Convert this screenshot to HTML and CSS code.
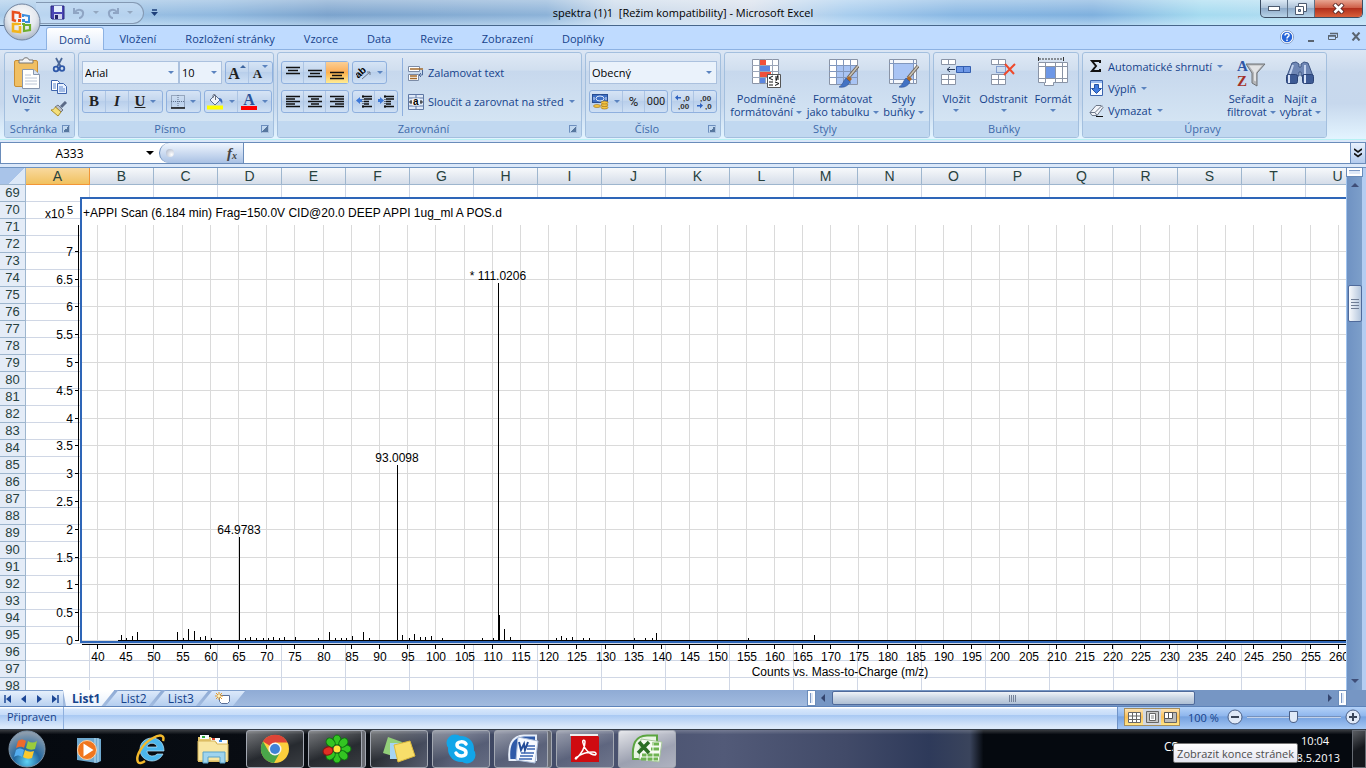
FILE: index.html
```html
<!DOCTYPE html>
<html lang="cs">
<head>
    <meta charset="UTF-8">
    <meta name="viewport" content="width=device-width, initial-scale=1.0">
    <title>spektra (1)1 [Režim kompatibility] - Microsoft Excel</title>
    <link rel="stylesheet" href="styles.css">
</head>
<body>
    <header class="titlebar">
        <button class="office-btn" aria-label="Tlačítko Office">
            <svg width="38" height="38" viewBox="0 0 38 38">
                <defs>
                    <radialGradient id="orb" cx="50%" cy="35%" r="65%">
                        <stop offset="0" stop-color="#fff"/><stop offset=".6" stop-color="#e4e8ee"/><stop offset="1" stop-color="#a9b4c4"/>
                    </radialGradient>
                </defs>
                <circle cx="19" cy="19" r="18" fill="url(#orb)" stroke="#71849f"/>
                <g fill="none" stroke-width="2.6">
                    <path d="M17 10l-7-1v8l3 1M17 10v5" stroke="#e8501e"/>
                    <path d="M20 14v-2l6 1v6h-4" stroke="#3b8ede" stroke-width="2"/>
                    <path d="M16 21h-6v7l7 1v-6" stroke="#f3b41b"/>
                    <path d="M20 22h7v5l-6 1v-5" stroke="#6fae2c" stroke-width="2.2"/>
                </g>
                <path d="M15 16h3v3h-3z" fill="#e8501e"/><path d="M19 16h3v3h-3z" fill="#3b8ede"/>
                <path d="M15 20h3v2h-3z" fill="#f3b41b"/><path d="M19 20h3v2h-3z" fill="#6fae2c"/>
            </svg>
        </button>
        <div class="quick">
            <button aria-label="Uložit"><svg width="15" height="15" viewBox="0 0 15 15"><path d="M1 1h13v13H2l-1-1z" fill="#4a45b5" stroke="#2b287c"/><path d="M4 1h8v6H4z" fill="#e4eefc"/><path d="M4 9h8v5H4z" fill="#d0d3ee"/><path d="M5 10h3v4H5z" fill="#26236b"/></svg></button>
            <button aria-label="Zpět"><svg width="14" height="14" viewBox="0 0 14 14"><path d="M2 2v5h5M3 6c3-4 9-2 8 2 0 2-2 4-4 4" fill="none" stroke="#8fa5c4" stroke-width="2"/></svg></button>
            <span class="caret grey"></span>
            <button aria-label="Znovu"><svg width="14" height="14" viewBox="0 0 14 14"><path d="M12 2v5H7M11 6C8 2 2 4 3 8c0 2 2 4 4 4" fill="none" stroke="#8fa5c4" stroke-width="2"/></svg></button>
            <span class="caret grey"></span>
        </div>
        <button class="quick-more" aria-label="Přizpůsobit panel"><svg width="7" height="8" viewBox="0 0 7 8"><path d="M1 1h5" stroke="#1d3f7a" stroke-width="1.5"/><path d="M0 3h7L3.5 7z" fill="#1d3f7a"/></svg></button>
        <h1>spektra (1)1&nbsp; [Režim kompatibility] - Microsoft Excel</h1>
        <div class="win-btns">
            <button aria-label="Minimalizovat"><svg width="14" height="7"><rect x="1.5" y="1.5" width="11" height="4" fill="#fff" stroke="#4d5b70"/></svg></button>
            <button aria-label="Obnovit"><svg width="12" height="12" viewBox="0 0 12 12"><path d="M3.5.5h8v8h-8z" fill="#fff" stroke="#4d5b70"/><path d="M.5 3.5h8v8h-8z" fill="#fff" stroke="#4d5b70"/><path d="M3.500 6.500h2v2h-2z" fill="#9fb6d0" stroke="#4d5b70"/></svg></button>
            <button class="close" aria-label="Zavřít"><svg width="13" height="11" viewBox="0 0 13 11"><path d="M2 1l9 9M11 1l-9 9" stroke="#5c2a28" stroke-width="4.500"/><path d="M2.500 1.500l8 8M10.500 1.500l-8 8" stroke="#fff" stroke-width="2.500"/></svg></button>
        </div>
    </header>

    <nav class="tabs">
        <button class="tab active">Domů</button>
        <button class="tab">Vložení</button>
        <button class="tab">Rozložení stránky</button>
        <button class="tab">Vzorce</button>
        <button class="tab">Data</button>
        <button class="tab">Revize</button>
        <button class="tab">Zobrazení</button>
        <button class="tab">Doplňky</button>
        <div class="doc-btns">
            <button aria-label="Nápověda"><svg width="14" height="14" viewBox="0 0 14 14"><circle cx="7" cy="7" r="6" fill="#2765d8" stroke="#fff" stroke-width="1.500"/><circle cx="7" cy="7" r="6.600" fill="none" stroke="#4b6ea8" stroke-width=".6"/><path d="M5 5.500c0-3 4.500-2.500 4 0-.3 1.200-2 1.200-2 3M7 9.500v1.500" fill="none" stroke="#fff" stroke-width="1.500"/></svg></button>
            <button aria-label="Minimalizovat sešit"><svg width="8" height="12"><path d="M1 10h6" stroke="#5a6470" stroke-width="2"/></svg></button>
            <button aria-label="Obnovit sešit"><svg width="10" height="10" viewBox="0 0 10 10"><path d="M2.500 1.500h7v4h-2M.5 3.500h7v4h-7z" fill="none" stroke="#5a6470"/><path d="M0 4h8M2 1.500h8" stroke="#5a6470" stroke-width="1.500"/></svg></button>
            <button aria-label="Zavřít sešit"><svg width="10" height="9" viewBox="0 0 10 9"><path d="M1.500.5l7 8M8.500.5l-7 8" stroke="#5a6470" stroke-width="2"/></svg></button>
        </div>
    </nav>

    <section class="ribbon">
        <div class="group g-clip">
            <div class="group-body">
                <button class="big">
                    <svg width="28" height="32" viewBox="0 0 28 32"><rect x="1.500" y="3.500" width="23" height="26" rx="1.500" fill="#f0bf63" stroke="#c98f35"/><path d="M6 6V3h4c0-3 6-3 6 0h4v3z" fill="#f4f4f4" stroke="#777"/><path d="M9.500 12.500h11l6 5v14h-17z" fill="#fff" stroke="#8796ae"/><path d="M20.500 12.500v5h6" fill="#d8e2f0" stroke="#8796ae"/><path d="M12 18h6M12 21h12M12 24h12M12 27h12" stroke="#bcc6d6"/></svg>
                    <span>Vložit</span><i class="caret"></i>
                </button>
                <div class="col">
                    <button aria-label="Vyjmout"><svg width="16" height="16" viewBox="0 0 16 16"><path d="M5 1l5 9M11 1L6 10" stroke="#4a6798" stroke-width="1.800"/><circle cx="5" cy="12" r="2.300" fill="none" stroke="#2f58a8" stroke-width="1.800"/><circle cx="11" cy="11.500" r="2.300" fill="none" stroke="#2f58a8" stroke-width="1.800"/></svg></button>
                    <button aria-label="Kopírovat"><svg width="16" height="16" viewBox="0 0 16 16"><path d="M.5 1.500h6l2 2v8h-8z" fill="#fff" stroke="#3e65ad"/><path d="M6.500 4.500h6l3 3v7h-9z" fill="#eaf2ff" stroke="#3e65ad"/><path d="M2 5h3M2 7h3M2 9h3M8 8h4M8 10h6M8 12h6" stroke="#5b85cc"/></svg></button>
                    <button aria-label="Kopírovat formát"><svg width="16" height="16" viewBox="0 0 16 16"><path d="M15 1l-5 5" stroke="#5b6a86" stroke-width="3"/><path d="M7 4l5 5-2 2-6-5z" fill="#b9bec8" stroke="#6d7789"/><path d="M4.500 6L10 11l-3 4-7-6c2 0 3-1 4.500-3z" fill="#f4df7a" stroke="#a98d2c"/></svg></button>
                </div>
            </div>
            <div class="group-label"><span>Schránka</span><button class="launch" aria-label="Schránka"></button></div>
        </div>

        <div class="group g-font">
            <div class="group-body rows">
                <div class="row">
                    <div class="combo-pair">
                        <span class="combo wide"><select aria-label="Písmo"><option>Arial</option></select></span>
                        <span class="combo small"><select aria-label="Velikost písma"><option>10</option></select></span>
                    </div>
                    <div class="btns push">
                        <button class="serif big-a" aria-label="Zvětšit písmo">A<i class="up"></i></button><button class="serif small-a" aria-label="Zmenšit písmo">A<i class="down"></i></button>
                    </div>
                </div>
                <div class="row">
                    <div class="btns">
                        <button class="serif"><b>B</b></button><button class="serif"><b><em>I</em></b></button><button class="serif split"><b><u>U</u></b><i class="caret"></i></button>
                    </div>
                    <div class="btns">
                        <button class="split" aria-label="Ohraničení"><svg width="14" height="14" viewBox="0 0 14 14"><path d="M.5.5h13v12H.5zM7 0v13M0 6.500h14" fill="none" stroke="#5f708c" stroke-dasharray="1 1"/><path d="M0 13h14" stroke="#111" stroke-width="1.500"/></svg><i class="caret"></i></button>
                    </div>
                    <div class="btns push">
                        <button class="split" aria-label="Barva výplně"><svg width="17" height="16" viewBox="0 0 17 16"><path d="M8 1l5 5-5 5-5-5z" fill="#eef3fb" stroke="#5a6e90"/><path d="M6 4V1.500c0-1.500 2.500-1.500 2.500 0V6" fill="none" stroke="#6a6f7a"/><path d="M12 4c3 0 4 3 3 6-1-3-2-3-3-3z" fill="#3b6bbd"/><path d="M0 11.500h16v4H0z" fill="#ff0"/></svg><i class="caret"></i></button><button class="split" aria-label="Barva písma"><span class="font-color">A</span><i class="caret"></i></button>
                    </div>
                </div>
            </div>
            <div class="group-label"><span>Písmo</span><button class="launch" aria-label="Písmo"></button></div>
        </div>

        <div class="group g-align">
            <div class="group-body">
                <div class="rows">
                    <div class="row">
                        <div class="btns even">
                            <button aria-label="Zarovnat nahoru"><svg width="14" height="14"><path d="M0 1.500h14M2 4.500h10M0 7.500h14" stroke="#111" stroke-width="1.500"/></svg></button><button aria-label="Zarovnat na střed svisle"><svg width="14" height="14"><path d="M0 4.500h14M2 7.500h10M0 10.500h14" stroke="#111" stroke-width="1.500"/></svg></button><button class="on" aria-label="Zarovnat dolů"><svg width="14" height="14"><path d="M0 6.500h14M2 9.500h10M0 12.500h14" stroke="#111" stroke-width="1.500"/></svg></button>
                        </div>
                        <div class="btns"><button class="split" aria-label="Orientace"><svg width="16" height="14" viewBox="0 0 16 14"><text x="0" y="9" class="ab" transform="rotate(-42 6 8)">ab</text><path d="M6 13l8-7M11 6h3v3" fill="none" stroke="#6a7689"/></svg><i class="caret"></i></button></div>
                    </div>
                    <div class="row">
                        <div class="btns even">
                            <button aria-label="Zarovnat text vlevo"><svg width="14" height="14"><path d="M0 1.500h14M0 4h9M0 6.500h14M0 9h9M0 11.500h14" stroke="#111" stroke-width="1.300"/></svg></button><button aria-label="Zarovnat na střed"><svg width="14" height="14"><path d="M0 1.500h14M3 4h8M0 6.500h14M3 9h8M0 11.500h14" stroke="#111" stroke-width="1.300"/></svg></button><button aria-label="Zarovnat text vpravo"><svg width="14" height="14"><path d="M0 1.500h14M5 4h9M0 6.500h14M5 9h9M0 11.500h14" stroke="#111" stroke-width="1.300"/></svg></button>
                        </div>
                        <div class="btns even">
                            <button aria-label="Zmenšit odsazení"><svg width="16" height="14" viewBox="0 0 16 14"><path d="M6 1.500h10M8 4h8M8 6.500h5M8 9h5M6 11.500h10" stroke="#111" stroke-width="1.300"/><path d="M7 0v14" stroke="#111" stroke-dasharray="1 1"/><path d="M0 5.500l4-3.500v2h2v3H4v2z" fill="#3d78d8"/></svg></button><button aria-label="Zvětšit odsazení"><svg width="16" height="14" viewBox="0 0 16 14"><path d="M6 1.500h10M8 4h8M8 6.500h5M8 9h5M6 11.500h10" stroke="#111" stroke-width="1.300"/><path d="M7 0v14" stroke="#111" stroke-dasharray="1 1"/><path d="M6 5.500L2 2v2H0v3h2v2z" fill="#3d78d8"/></svg></button>
                        </div>
                    </div>
                </div>
                <div class="sep"></div>
                <div class="rows">
                    <button class="line"><svg width="16" height="16" viewBox="0 0 16 16"><path d="M.5 1.500h11v5H.5zM.5 9.500h10v6H.5z" fill="#fff" stroke="#7b8ba6"/><path d="M2 4h13M2 11h7M2 13.500h7" stroke="#a2692b" stroke-width="1.300"/><path d="M14.500 5v5h-3M13 8l-2 2 2 2" fill="none" stroke="#4a6798"/></svg>Zalamovat text</button>
                    <button class="line"><svg width="16" height="16" viewBox="0 0 16 16"><path d="M.5.5h15v15H.5z" fill="#dfe9f8" stroke="#5f78a5"/><path d="M0 4h16M0 12h16M8 0v4M8 12v4" stroke="#5f78a5"/><path d="M1 8h3M12 8h3M3 6v4M13 6v4" stroke="#222"/><path d="M4.500 4.500h7v7h-7z" fill="#fff"/><text x="5" y="11" class="tiny">a</text></svg>Sloučit a zarovnat na střed<i class="caret"></i></button>
                </div>
            </div>
            <div class="group-label"><span>Zarovnání</span><button class="launch" aria-label="Zarovnání"></button></div>
        </div>

        <div class="group g-num">
            <div class="group-body rows">
                <div class="row"><span class="combo full"><select aria-label="Formát čísla"><option>Obecný</option></select></span></div>
                <div class="row">
                    <div class="btns">
                        <button class="split" aria-label="Finanční formát"><svg width="17" height="16" viewBox="0 0 17 16"><rect x=".5" y=".5" width="15" height="8" fill="#3e6fc4" stroke="#284d92"/><ellipse cx="8" cy="4.500" rx="4" ry="2.500" fill="none" stroke="#dce8fa"/><path d="M2 3v3M14 3v3" stroke="#dce8fa"/><g fill="#f4c542" stroke="#9a6b14" stroke-width=".6"><ellipse cx="12.500" cy="13.500" rx="3.500" ry="1.500"/><ellipse cx="12.500" cy="11" rx="3.500" ry="1.500"/><ellipse cx="12.500" cy="8.500" rx="3.500" ry="1.500"/><ellipse cx="5" cy="12" rx="3.500" ry="1.500"/></g></svg><i class="caret"></i></button><button class="num">%</button><button class="num thou">000</button>
                    </div>
                    <div class="btns push even">
                        <button class="dec" aria-label="Přidat desetinné místo"><svg width="16" height="16" viewBox="0 0 16 16"><text x="8" y="7">,0</text><text x="3" y="15">,00</text><path d="M0 3.500L3 1v2h3v1.500H3v2z" fill="#2f62bf"/></svg></button><button class="dec" aria-label="Odebrat desetinné místo"><svg width="16" height="16" viewBox="0 0 16 16"><text x="3" y="7">,00</text><text x="8" y="15">,0</text><path d="M6 11.500L3 9v2H0v1.500h3v2z" fill="#2f62bf"/></svg></button>
                    </div>
                </div>
            </div>
            <div class="group-label"><span>Číslo</span><button class="launch" aria-label="Číslo"></button></div>
        </div>

        <div class="group g-style">
            <div class="group-body">
                <button class="big"><svg width="32" height="32" viewBox="0 0 32 32"><path d="M2.500 2.500h26v24h-26z" fill="#fff" stroke="#8a94a6"/><path d="M2 8.500h27M2 14.500h27M2 20.500h27M9.500 2v25M15.500 2v25M22.500 2v25" stroke="#9aa5b8"/><path d="M10 3h6v5h-6zM10 15h11v5H10z" fill="#f0503a"/><path d="M10 9h10v5H10zM10 21h5v5h-5z" fill="#5b86e0"/><path d="M17.500 17.500h13v13h-13z" fill="#fff" stroke="#555"/><path d="M23 19l-4 2 4 2M19 25h4M19 28h4M25 20h4M25 22h4M28 18l-2 6M25 25l4 1.500-4 2" fill="none" stroke="#111"/></svg>
                    <span>Podmíněné<br>formátování<i class="caret"></i></span></button>
                <button class="big"><svg width="32" height="32" viewBox="0 0 32 32"><path d="M2.500 2.500h28v25h-28z" fill="#fff" stroke="#8a94a6"/><path d="M9 9h21v18H9z" fill="#a9c4f4"/><path d="M2 8.500h29M2 14.500h29M2 20.500h29M9.500 2v26M16.500 2v26M23.500 2v26" stroke="#8197bd"/><path d="M31 9L21 21" stroke="#71685d" stroke-width="3.500"/><path d="M31 9L21 21" stroke="#c9c3b6" stroke-width="1.500"/><path d="M22 19l3 3-3 3-3-3z" fill="#b06a28"/><path d="M19 21l4 4c-2 4-6 6-11 5 4-2 4-6 7-9z" fill="#4373c4" stroke="#2b4f92" stroke-width=".6"/></svg>
                    <span>Formátovat<br>jako tabulku<i class="caret"></i></span></button>
                <button class="big"><svg width="32" height="32" viewBox="0 0 32 32"><path d="M2.500 2.500h27v24h-27z" fill="#f4f7fc" stroke="#8a94a6"/><path d="M7 7h19v15H7z" fill="#a9c4f4"/><path d="M2 6.500h28M2 22.500h28M6.500 2v25M26.500 2v25" stroke="#8197bd"/><path d="M31 9L21 21" stroke="#71685d" stroke-width="3.500"/><path d="M31 9L21 21" stroke="#c9c3b6" stroke-width="1.500"/><path d="M22 19l3 3-3 3-3-3z" fill="#b06a28"/><path d="M19 21l4 4c-2 4-6 6-11 5 4-2 4-6 7-9z" fill="#4373c4" stroke="#2b4f92" stroke-width=".6"/></svg>
                    <span>Styly<br>buňky<i class="caret"></i></span></button>
            </div>
            <div class="group-label"><span>Styly</span></div>
        </div>

        <div class="group g-cells">
            <div class="group-body">
                <button class="big"><svg width="32" height="32" viewBox="0 0 32 32"><path d="M1.500 2.500h14v5h-14zM1.500 17.500h14v10h-14zM8.500 2v6M8.500 17v11M1 22.500h15" fill="#fff" stroke="#8a94a6"/><path d="M16.500 9.500h14v6h-14z" fill="#6d97e6" stroke="#345fb0"/><path d="M23.500 9v7" stroke="#345fb0"/><path d="M7 12.500h8M10 10l-3 2.500 3 2.500" fill="none" stroke="#2b3b58"/></svg>
                    <span>Vložit</span><i class="caret"></i></button>
                <button class="big"><svg width="32" height="32" viewBox="0 0 32 32"><path d="M3.500 2.500h14v5h-14zM3.500 17.500h14v10h-14zM10.500 2v6M10.500 17v11M3 22.500h15" fill="#fff" stroke="#8a94a6"/><path d="M8.500 9.500h9v6h-9z" fill="none" stroke="#345fb0" stroke-dasharray="1 1"/><path d="M17 7l9 10M27 7L16 18" stroke="#ee4a2c" stroke-width="2"/></svg>
                    <span>Odstranit</span><i class="caret"></i></button>
                <button class="big"><svg width="32" height="32" viewBox="0 0 32 32"><path d="M1.500 5.500h29v20h-14v3h-9v-3h-6z" fill="#fff" stroke="#8a94a6"/><path d="M1 9.500h30M1 21.500h30M8.500 5v21M18.500 5v21M25.500 5v21" stroke="#8a94a6"/><path d="M9 10h9v11H9z" fill="#6d97e6"/><path d="M1.500 0v4M26.500 0v4" stroke="#333"/><path d="M2 2h24" stroke="#333" stroke-dasharray="2 1"/></svg>
                    <span>Formát</span><i class="caret"></i></button>
            </div>
            <div class="group-label"><span>Buňky</span></div>
        </div>

        <div class="group g-edit">
            <div class="group-body">
                <div class="list">
                    <button class="line"><svg width="16" height="16" viewBox="0 0 16 16"><path d="M12 5V3H4l4 5-4 5h8v-2" fill="none" stroke="#111" stroke-width="2"/></svg>Automatické shrnutí<i class="caret"></i></button>
                    <button class="line"><svg width="16" height="16" viewBox="0 0 16 16"><path d="M2.500.5h12v15h-12z" fill="#f5f9ff" stroke="#3a64ae"/><path d="M3 1h11v2H3z" fill="#9bbcf0"/><path d="M6.500 4.500h4v4h3l-5 5-5-5h3z" fill="#3f7be0" stroke="#2450a0"/></svg>Výplň<i class="caret"></i></button>
                    <button class="line"><svg width="16" height="16" viewBox="0 0 16 16"><path d="M8 3.500h5l2 2-6 8H4l-2-3z" fill="#f2f5fa" stroke="#6b7688"/><path d="M2 10.500h5l2 3M7 10.500l7-7" fill="none" stroke="#6b7688"/><path d="M8 14.500h7" stroke="#111"/></svg>Vymazat<i class="caret"></i></button>
                </div>
                <button class="big"><svg width="32" height="32" viewBox="0 0 32 32"><text x="2" y="14" class="az blue">A</text><text x="2" y="29" class="az red">Z</text><path d="M11 7h19l-8 9v13l-5-3V16z" fill="#b4b6b9" stroke="#6f7377"/><path d="M14 8.500h13l-6 7v9l-2-1v-8z" fill="#e2e3e5"/></svg>
                    <span>Seřadit a<br>filtrovat<i class="caret"></i></span></button>
                <button class="big"><svg width="32" height="32" viewBox="0 0 32 32"><path d="M8 6l4-1 3 2v3h2V7l3-2 4 1 5 13H17v-4h-2v4H3z" fill="#6f87b5" stroke="#3e5684"/><rect x="2.500" y="17.500" width="11" height="9" rx="2" fill="#3d5a94" stroke="#2a4275"/><rect x="18.500" y="17.500" width="11" height="9" rx="2" fill="#3d5a94" stroke="#2a4275"/><path d="M5 18v8M21 18v8" stroke="#d7e3f8" stroke-width="2"/><path d="M9 8L6 17M21 8v9" stroke="#c4d4f0" stroke-width="2"/></svg>
                    <span>Najít a<br>vybrat<i class="caret"></i></span></button>
            </div>
            <div class="group-label"><span>Úpravy</span></div>
        </div>
    </section>

    <div class="formula-wrap">
        <div class="formula">
            <div class="name-box"><input type="text" value="A333" aria-label="Pole názvů"><i class="caret black"></i></div>
            <div class="fx"><span class="knob"></span><button aria-label="Vložit funkci">f<small>x</small></button></div>
            <input class="formula-input" type="text" aria-label="Řádek vzorců">
            <button class="expand" aria-label="Rozbalit řádek vzorců"><svg width="8" height="10" viewBox="0 0 8 10"><path d="M0 1l4 3 4-3M0 5.500l4 3 4-3" fill="none" stroke="#111" stroke-width="1.600"/></svg></button>
        </div>
    </div>

    <main class="sheet">
        <div class="cells">
            <table>
                <thead><tr id="cols"></tr></thead>
                <tbody id="rows"></tbody>
            </table>
            <svg id="chart" class="chart" width="1320" height="505" viewBox="26 185 1320 505" role="img" aria-label="Hmotnostní spektrum"></svg>
        </div>
        <div class="vscroll">
            <span class="split-h"></span>
            <i class="up"></i>
            <span class="thumb"></span>
            <i class="down"></i>
        </div>
    </main>

    <div class="sheet-bar">
        <div class="nav">
            <button aria-label="První list"><svg width="8" height="8"><path d="M1 0v8" stroke="#1d4796" stroke-width="1.500"/><path d="M7 0v8L2 4z" fill="#1d4796"/></svg></button>
            <button aria-label="Předchozí list"><svg width="8" height="8"><path d="M6 0v8L1 4z" fill="#1d4796"/></svg></button>
            <button aria-label="Další list"><svg width="8" height="8"><path d="M2 0v8l5-4z" fill="#1d4796"/></svg></button>
            <button aria-label="Poslední list"><svg width="8" height="8"><path d="M7 0v8" stroke="#1d4796" stroke-width="1.500"/><path d="M1 0v8l5-4z" fill="#1d4796"/></svg></button>
        </div>
        <div class="sheets">
            <button class="sheet-tab active">List1</button>
            <button class="sheet-tab">List2</button>
            <button class="sheet-tab">List3</button>
            <button class="sheet-tab" aria-label="Vložit list"><svg width="16" height="13" viewBox="0 0 16 13"><path d="M4.500 3.500h10v6l-2 2h-6l-2-2z" fill="#fff" stroke="#5a7099"/><path d="M4 0v8M0 4h8M1 1l6 6M7 1L1 7" stroke="#e59a25"/><circle cx="4" cy="4" r="1.500" fill="#fff2b8"/></svg></button>
        </div>
        <div class="hscroll">
            <span class="split-v"></span>
            <i class="left"></i>
            <span class="track"><span class="thumb"></span></span>
            <i class="right"></i>
            <span class="split-v"></span>
        </div>
    </div>

    <footer class="status">
        <span class="ready">Připraven</span>
        <div class="status-right">
            <div class="views">
                <button class="on" aria-label="Normální"><svg width="13" height="11" viewBox="0 0 13 11"><path d="M.5.5h12v10H.5zM.5 4h12M.5 7.500h12M4.500 0v11M8.500 0v11" fill="#fff" stroke="#666"/></svg></button><button aria-label="Rozložení stránky"><svg width="13" height="12" viewBox="0 0 13 12"><path d="M.5.5h12v11H.5z" fill="#c8c8c8" stroke="#666"/><path d="M3.500 2.500h6v7h-6z" fill="#fff" stroke="#666"/><path d="M5 5h3M5 7h3" stroke="#888"/></svg></button><button class="on" aria-label="Zobrazit konce stránek"><svg width="13" height="11" viewBox="0 0 13 11"><path d="M.5.5h12v10H.5z" fill="#bbb" stroke="#666"/><path d="M.5.5h4v6h-4zM4.500.5h4v6h-4z" fill="#fff" stroke="#555"/></svg></button>
            </div>
            <button class="pct">100 %</button>
            <button class="zoom" aria-label="Oddálit"><svg width="16" height="16"><circle cx="8" cy="8" r="7" fill="#dfe9f8" stroke="#4a5f86"/><path d="M4 8h8" stroke="#3a4558" stroke-width="2"/></svg></button>
            <input type="range" min="0" max="100" value="50" aria-label="Lupa">
            <button class="zoom" aria-label="Přiblížit"><svg width="16" height="16"><circle cx="8" cy="8" r="7" fill="#dfe9f8" stroke="#4a5f86"/><path d="M4 8h8M8 4v8" stroke="#3a4558" stroke-width="2"/></svg></button>
        </div>
    </footer>

    <footer class="taskbar">
        <button class="task plain start" aria-label="Start"><svg width="38" height="38" viewBox="0 0 38 38"><defs><radialGradient id="start" cx="50%" cy="85%" r="80%"><stop offset="0" stop-color="#5fd3f5"/><stop offset=".45" stop-color="#24689f"/><stop offset="1" stop-color="#8d9dad"/></radialGradient></defs><circle cx="19" cy="19" r="18" fill="url(#start)" stroke="#7d94a8"/><path d="M10 11c3-2 5-2 8 0l-2 7c-3-2-5-1-8 0z" fill="#ee6a2c"/><path d="M20 11c3 2 6 2 9 0l-2 8c-3 1-6 1-9-1z" fill="#9acb3c"/><path d="M8 20c3-2 5-2 8 0l-2 7c-3-2-5-2-8 0z" fill="#55aef0"/><path d="M17 20c3 2 6 2 9 1l-2 7c-3 1-6 1-9-1z" fill="#fcc92d"/></svg></button>
        <button class="task plain" aria-label="Windows Media Player"><svg width="32" height="32" viewBox="0 0 32 32"><path d="M4 5h20l4 1v22l-4 2L4 27z" fill="#6fa9cf"/><path d="M22 5v25M25 5v24" stroke="#bfe0f3"/><circle cx="14" cy="17" r="9.500" fill="#f0761e" stroke="#fbd3a8"/><path d="M10.500 10.500v13l10-6.500z" fill="#fff"/></svg></button>
        <button class="task plain" aria-label="Internet Explorer"><svg width="34" height="34" viewBox="0 0 34 34"><path d="M29 22c-2 4-6 7-11 7C11 29 6 24 6 17.500S11 6 18 6s12 5 12 13H13c0 6 8 6 10 3zM13 15h10c-1-5-9-5-10 0z" fill="#4cb6ec" stroke="#bfe6fb" stroke-width=".7"/><path d="M29 9c2-6-3-7-10-3C9 11 1 24 4 30c1 2 4 1 7-1" fill="none" stroke="#f3b92c" stroke-width="2.500"/></svg></button>
        <button class="task plain" aria-label="Průzkumník"><svg width="34" height="34" viewBox="0 0 34 34"><path d="M2 5h13l2 3h15v22H2z" fill="#e5c66c"/><path d="M4 3h9v4H4zM15 6h9v4h-9zM21 8h10v4H21z" fill="#f8fbff"/><path d="M6 4h3v2H6z" fill="#2fae3c"/><path d="M16 6h3v2h-3z" fill="#d9452f"/><path d="M23 8h3v2h-3z" fill="#3b8fe0"/><path d="M2 9h17l2 3h11v17H2z" fill="#f8e6a2" stroke="#d5b459"/><path d="M7 31V20h22v11h-5v-6H12v6z" fill="#9fd4ee" stroke="#5aa3c9"/></svg></button>
        <button class="task" aria-label="Google Chrome"><svg width="30" height="30" viewBox="0 0 30 30"><circle cx="15" cy="15" r="14" fill="#fbcf3c"/><path d="M15 15L3 7.500A14 14 0 0 1 27.500 8.500H15z" fill="#dd4437"/><path d="M3 7.500A14 14 0 0 0 14 29l6-10.500L9 18z" fill="#4aa64a"/><circle cx="15" cy="15" r="6.500" fill="#f4f4f4"/><circle cx="15" cy="15" r="5" fill="#3e82d6"/></svg></button>
        <button class="task stack" aria-label="ICQ"><svg width="32" height="32" viewBox="0 0 32 32"><g fill="#33c522" stroke="#0d7310"><ellipse cx="16" cy="7" rx="4" ry="5"/><ellipse cx="16" cy="25" rx="4" ry="5"/><ellipse cx="25" cy="16" rx="5" ry="4"/><ellipse cx="16" cy="7" rx="4" ry="5" transform="rotate(45 16 16)"/><ellipse cx="16" cy="25" rx="4" ry="5" transform="rotate(-45 16 16)"/><ellipse cx="16" cy="7" rx="4" ry="5" transform="rotate(-45 16 16)"/><ellipse cx="16" cy="25" rx="4" ry="5" transform="rotate(45 16 16)"/></g><ellipse cx="7" cy="18" rx="5" ry="4" fill="#e02f24" stroke="#8c1010" transform="rotate(-20 7 18)"/><circle cx="16" cy="16" r="3.500" fill="#ffe23a"/></svg></button>
        <button class="task" aria-label="Rychlé poznámky"><svg width="34" height="30" viewBox="0 0 34 30"><path d="M6 3l14 5-6 15-13-4z" fill="#93cf7a"/><path d="M8 9h14v16H8z" fill="#a5d4f4"/><path d="M12 11l16-4 5 15-17 6z" fill="#f8de6a" stroke="#dcb93c"/></svg></button>
        <button class="task" aria-label="Skype"><svg width="30" height="30" viewBox="0 0 30 30"><circle cx="9" cy="9" r="8.500" fill="#12a5e8"/><circle cx="21" cy="21" r="8.500" fill="#12a5e8"/><circle cx="15" cy="15" r="13" fill="#12a5e8"/><path d="M20 10c-2-3-9-3-9 1 0 5 9 2 9 7.500 0 4.500-8 4.500-10 .5" fill="none" stroke="#fff" stroke-width="3.500" stroke-linecap="round"/></svg></button>
        <button class="task stack" aria-label="Word"><svg width="32" height="32" viewBox="0 0 32 32"><path d="M2.500 27C1 12 5 3 17 2.500h12V27z" fill="#2f5aa8" stroke="#e8effa" stroke-width="2"/><path d="M11 4l20 4-3 22-19-3z" fill="#f7faff" stroke="#a9bbd8"/><path d="M20 13h8M20 16h8M14 20h13M13 23h13M12 26h13" stroke="#3b66b3" stroke-width="1.500"/><path d="M12 9l2 8 3-6 1 6 3-8" fill="none" stroke="#234c98" stroke-width="2"/></svg></button>
        <button class="task" aria-label="Adobe Reader"><svg width="32" height="30" viewBox="0 0 32 30"><path d="M2 1h26l2 2v25H2z" fill="#cf0b10"/><path d="M1 0h28v2H1z" fill="#eee"/><path d="M7 25c4-4 9-11 9-17 0-3-3-2-2 1 1 6 7 12 12 12 2-1 1-3-2-3-6 0-12 2-16 5-2 1-2 2-1 2z" fill="none" stroke="#fff" stroke-width="1.500"/></svg></button>
        <button class="task active" aria-label="Excel"><svg width="34" height="32" viewBox="0 0 34 32"><path d="M3 26C2 11 5 3 17 2.500h10V26z" fill="#e9f5e3" stroke="#5ba53f" stroke-width="2"/><path d="M11 6l21 3-3 20-20-3z" fill="#f6fbf3" stroke="#a6c79a"/><path d="M22 11h7M21 16h8M12 22h17M11 26h17" stroke="#6eb352" stroke-width="3"/><path d="M17 19v9M23 10v18" stroke="#f6fbf3"/><path d="M9 9l10 11M19 9L8 20" stroke="#2c6e25" stroke-width="3.500"/></svg></button>
        <span class="lang">CS</span>
        <div class="clock"><time>10:04</time><span>28.5.2013</span></div>
        <button class="show-desktop" aria-label="Zobrazit plochu"></button>
        <div class="tooltip" role="tooltip">Zobrazit konce stránek</div>
    </footer>

    <script>
        // sloupce a řádky listu
        const letters = 'ABCDEFGHIJKLMNOPQRSTU'.split('');
        document.getElementById('cols').innerHTML = '<th class="corner"></th>' +
            letters.map(l => `<th scope="col" class="${l === 'A' ? 'selected' : ''}">${l}</th>`).join('');
        let body = '';
        for (let r = 69; r <= 98; r++) {
            body += `<tr><th scope="row">${r}</th>${'<td></td>'.repeat(letters.length)}</tr>`;
        }
        document.getElementById('rows').innerHTML = body;

        // spektrum
        const plotLeft = 82, plotTop = 225, plotBase = 640, plotRight = 1346;
        const xStep = 28.2, yStep = 27.8;
        let svg = `<rect class="frame" x="81" y="198" width="1290" height="444"/>`;
        let ticks = '', labels = '';

        for (let i = 0; i <= 14; i++) {
            const y = Math.round(plotBase - i * yStep);
            svg += `<path class="grid" d="M${plotLeft} ${y}.5H${plotRight}"/>`;
            ticks += `M75 ${y}.5H79`;
            labels += `<text x="73" y="${y + 5}" text-anchor="end">${i / 2}</text>`;
        }
        for (let i = 0; i <= 44; i++) {
            const x = Math.round(97 + i * xStep);
            svg += `<path class="grid" d="M${x}.5 ${plotTop}V${plotBase}"/>`;
            ticks += `M${x}.5 644V649`;
            labels += `<text x="${x + 1}" y="661" text-anchor="middle">${40 + i * 5}</text>`;
        }
        svg += `<path class="axis" d="M78.5 ${plotTop}V641M${plotLeft} 644.5H${plotRight}${ticks}"/>`;

        // [x, výška]
        const peaks = [
            [121, 5], [126, 2], [132, 4], [137, 8], [177, 8], [183, 2], [188, 11], [194, 9], [200, 3], [205, 4],
            [211, 2], [239, 103], [245, 2], [250, 3], [256, 2], [263, 2], [268, 2], [273, 3], [279, 2], [284, 3],
            [295, 3], [318, 2], [329, 8], [335, 2], [341, 2], [346, 2], [352, 4], [363, 8], [369, 2], [397, 175],
            [402, 5], [409, 2], [414, 6], [420, 3], [425, 3], [431, 4], [442, 2], [482, 2], [493, 2], [498, 357],
            [499, 25], [504, 11], [510, 3], [556, 2], [561, 4], [566, 2], [572, 3], [583, 2], [589, 2], [634, 2],
            [645, 2], [652, 2], [656, 7], [748, 2], [814, 5]
        ];
        svg += `<path class="axis" d="M118 640.5H${plotRight}${peaks.map(p => `M${p[0]}.5 ${plotBase}v-${p[1]}`).join('')}"/>`;
        svg += labels;
        svg += `<text x="45" y="218">x10</text><text x="67" y="214" class="exp">5</text>
            <text x="83" y="217">+APPI Scan (6.184 min) Frag=150.0V CID@20.0 DEEP APPI 1ug_ml A POS.d</text>
            <text x="239" y="534" text-anchor="middle">64.9783</text>
            <text x="397" y="462" text-anchor="middle">93.0098</text>
            <text x="498" y="280" text-anchor="middle">* 111.0206</text>
            <text x="840" y="676" text-anchor="middle">Counts vs. Mass-to-Charge (m/z)</text>`;
        document.getElementById('chart').innerHTML = svg;
    </script>
</body>
</html>
```
FILE: styles.css
```css
* {
    box-sizing: border-box;
}
body {
    margin: 0;
    height: 100vh;
    display: flex;
    flex-direction: column;
    overflow: hidden;
    font-family: "Open Sans", "Noto Sans", sans-serif;
    font-size: 11px;
    line-height: 13px;
    color: #15428b;
    background: #bfdbff;
}
button, input, select {
    font: inherit;
    color: inherit;
    background: none;
    border: 0;
    padding: 0;
    margin: 0;
}
button {
    display: flex;
    align-items: center;
    justify-content: center;
    white-space: nowrap;
}
svg {
    display: block;
    flex: none;
}

/* trojúhelníčky */
.caret, .down {
    flex: none;
    display: inline-block;
    border: 3px solid transparent;
    border-top-color: #5b83bf;
    border-bottom: 0;
}
.caret.grey {
    border-top-color: #93a7c0;
}
.caret.black {
    border-width: 4px;
    border-bottom: 0;
    border-top-color: #000;
}
.up {
    border: 3px solid transparent;
    border-top: 0;
    border-bottom-color: #3d659f;
}

/* titulek okna */
.titlebar {
    position: relative;
    display: flex;
    align-items: center;
    height: 26px;
    flex: none;
    padding-left: 36px;
    border-bottom: 1px solid #47668a;
    background:
        linear-gradient(rgba(255,255,255,.35), rgba(255,255,255,0) 60%, rgba(220,240,255,.5)),
        linear-gradient(90deg, #a9cbea 0, #8fb8df 16%, #7ba3cd 24%, #8cb2d8 40%, #c9d9ea 45%, #d8e0ec 55%, #a8cdee 62%, #88b7e3 70%, #7fb0de 80%, #a5dbf0 88%, #b9dcf2 100%);
}
.office-btn {
    position: absolute;
    left: 3px;
    top: 3px;
    z-index: 2;
}
.quick {
    display: flex;
    align-items: center;
    gap: 7px;
    height: 22px;
    padding: 0 10px 0 14px;
    border: 1px solid #8499b3;
    border-left: 0;
    border-radius: 0 11px 11px 0;
    background: rgba(200,222,245,.6);
}
.quick-more {
    margin-left: 7px;
}
h1 {
    margin: 0;
    flex: 1;
    padding-right: 52px;
    text-align: center;
    font-size: 11px;
    font-weight: 400;
    color: #000;
}
.win-btns {
    display: flex;
    align-self: flex-start;
    height: 18px;
    margin-right: 3px;
    border: 1px solid #3b4c62;
    border-top: 0;
    border-radius: 0 0 5px 5px;
    overflow: hidden;
    background: linear-gradient(#dce9f5, #a9bfd6 50%, #8fabc9 50%, #b7d3e8);
}
.win-btns button {
    width: 27px;
    border-right: 1px solid #5d7187;
}
.win-btns .close {
    width: 47px;
    border: 0;
    background: linear-gradient(#e8a591, #cf6049 45%, #b2301c 50%, #d9603b);
}

/* karty pásu */
.tabs {
    display: flex;
    flex: none;
    height: 24px;
    padding-left: 46px;
    gap: 1px;
    background: #bfdbff;
    border-bottom: 1px solid #8db2e3;
}
.tab {
    padding: 0 14px;
    height: 25px;
}
.tab.active {
    height: 23px;
    padding: 0 12px;
    margin-right: 1px;
    margin-top: 1px;
    border: 1px solid #8db2e3;
    border-bottom: 0;
    border-radius: 3px 3px 0 0;
    background: linear-gradient(#fff, #dfeafa);
}
.doc-btns {
    display: flex;
    align-items: center;
    gap: 13px;
    margin-left: auto;
    padding: 0 5px 2px 0;
}

/* pás karet */
.ribbon {
    display: flex;
    flex: none;
    gap: 3px;
    height: 90px;
    padding: 2px 4px;
    background: linear-gradient(#dbe6f4, #c9d9ed 25%, #c7d8ed 60%, #e3f4ff);
    border-bottom: 1px solid #b5f1f3;
}
.group {
    display: flex;
    flex-direction: column;
    flex: none;
    height: 86px;
    border: 1px solid #a3bfde;
    border-radius: 3px;
    background: linear-gradient(#dee8f5, #d1dfef 20%, #c7d8ed 22%, #d8e8f5);
    overflow: hidden;
}
.g-clip { width: 71px; }
.g-font { width: 196px; }
.g-align { width: 305px; }
.g-num { width: 136px; }
.g-style { width: 206px; }
.g-cells { width: 146px; }
.g-edit { width: 245px; }
.group-body {
    flex: 1;
    display: flex;
    padding: 2px 3px 0;
}
.group-label {
    display: flex;
    align-items: center;
    height: 16px;
    padding: 0 4px 1px 0;
    background: #c1d8f0;
    color: #3e6aaa;
}
.group-label span {
    flex: 1;
    text-align: center;
}
.launch {
    width: 8px;
    height: 8px;
    border: 1px solid #6d8fbf;
    border-right-color: #a9c0de;
    border-bottom-color: #a9c0de;
    background: linear-gradient(135deg, transparent 50%, #57779f 50%);
}
.rows {
    display: flex;
    flex-direction: column;
    gap: 6px;
    padding-top: 6px;
}
.group-body.rows {
    padding: 8px 3px 0;
}
.row {
    display: flex;
    gap: 3px;
    height: 23px;
}
.push {
    margin-left: auto;
}
.big {
    flex-direction: column;
    justify-content: flex-start;
    flex: 1 1 auto;
    padding: 2px 2px 0;
    gap: 3px;
}
.big > .caret {
    margin-top: 1px;
}
.big span .caret {
    margin: 0 0 2px 3px;
}
.col {
    display: flex;
    flex-direction: column;
    gap: 6px;
    padding: 2px 4px 0 6px;
}
.btns {
    display: flex;
    border: 1px solid #8fb0de;
    border-radius: 3px;
    background: linear-gradient(#d6e4f5, #c3d6ee 45%, #b9cfeb 50%, #cfe0f4);
}
.btns button {
    width: 23px;
    border-right: 1px solid #adc5e4;
}
.btns button:last-child {
    border-right: 0;
}
.btns.even button {
    width: 22px;
}
.btns .split {
    width: 33px;
    gap: 5px;
}
.btns .on {
    background: linear-gradient(#fbcf95, #fdb05a 45%, #fdb24d 50%, #ffec93);
}
.serif {
    font-family: "Liberation Serif", serif;
    font-size: 15px;
    color: #222;
}
.big-a, .small-a {
    font-weight: 700;
    align-items: flex-end;
    padding-bottom: 3px;
}
.big-a {
    font-size: 16px;
}
.small-a {
    font-size: 13px;
}
.big-a i, .small-a i {
    align-self: flex-start;
    margin-top: 3px;
}
.font-color {
    width: 16px;
    border-bottom: 4px solid #f00;
    font: 700 16px/12px "Liberation Serif", serif;
    color: #2b5299;
}
.combo-pair {
    display: flex;
}
.combo {
    display: flex;
    align-items: center;
    height: 23px;
    border: 1px solid #abc1de;
    background: #eaf2fb;
}
.combo::after {
    content: "";
    margin: 0 4px 0 -10px;
    border: 3px solid transparent;
    border-top-color: #5b83bf;
    border-bottom: 0;
    pointer-events: none;
}
.combo select {
    appearance: none;
    flex: 1;
    height: 21px;
    padding-left: 2px;
    color: #000;
}
.combo.wide { width: 97px; }
.combo.small { width: 43px; }
.combo.full { width: 100%; }
.sep {
    width: 1px;
    margin: 3px 5px 5px 4px;
    background: #8fb0de;
}
.line {
    justify-content: flex-start;
    height: 23px;
    gap: 4px;
}
.line .caret {
    margin-left: 1px;
}
.list {
    width: 142px;
    padding-left: 2px;
    display: flex;
    flex-direction: column;
}
.list .line {
    height: 22px;
}
.btns .num {
    width: 22px;
    font-family: Roboto, sans-serif;
    font-size: 13px;
    color: #222;
}
.btns .thou {
    font-size: 11px;
}
.dec text {
    font: 700 8px "Liberation Sans", sans-serif;
    fill: #333;
}
.ab {
    font: 700 10px "Liberation Sans", sans-serif;
}
.tiny {
    font: 700 10px "Liberation Sans", sans-serif;
}
.az {
    font: 700 15px "Liberation Serif", serif;
}
.blue { fill: #2d56a5; }
.red { fill: #a33128; }

/* řádek vzorců */
.formula-wrap {
    flex: none;
    padding: 2px 0 3px;
    background: #dbe8f9;
    border-bottom: 1px solid #6f93c0;
}
.formula {
    display: flex;
    height: 22px;
    border: 1px solid #6a8cba;
    background: #fff;
}
.name-box {
    display: flex;
    align-items: center;
    width: 158px;
    padding-right: 5px;
    color: #000;
}
.name-box input {
    flex: 1;
    min-width: 0;
    padding-right: 8px;
    text-align: center;
    font-size: 12px;
}
.fx {
    display: flex;
    align-items: center;
    justify-content: space-between;
    width: 85px;
    padding: 0 6px;
    border: 1px solid #6a8cba;
    border-width: 0 1px;
    border-radius: 11px 0 0 11px;
    background: linear-gradient(#f0f6fe, #a9c1e4);
}
.knob {
    width: 8px;
    height: 8px;
    border-radius: 50%;
    background: radial-gradient(circle at 70% 70%, #fff, #a5afc4);
}
.fx button {
    font: italic 700 15px "Liberation Serif", serif;
    color: #444;
}
.fx small {
    font-size: 10px;
    padding-top: 4px;
}
.formula-input {
    flex: 1;
    min-width: 0;
}
.expand {
    width: 15px;
    border-left: 1px solid #6a8cba;
    background: linear-gradient(#e8f1fd, #b3cbee);
}

/* list */
.sheet {
    flex: 1;
    min-height: 0;
    display: flex;
}
.cells {
    position: relative;
    flex: 1;
    overflow: hidden;
    background: #fff;
}
table {
    table-layout: fixed;
    width: 1370px;
    border-collapse: separate;
    border-spacing: 0;
    font-family: "Liberation Sans", sans-serif;
}
th, td {
    width: 64px;
    height: 17px;
    padding: 0;
    border-right: 1px solid #d0d7e5;
    border-bottom: 1px solid #d0d7e5;
}
th {
    font-size: 14px;
    line-height: 16px;
    font-weight: 400;
    color: #27413e;
}
thead th {
    background: linear-gradient(#f7f9fb, #d5dde9);
    border-color: #9eb6ce;
}
thead .corner {
    width: 26px;
    background: linear-gradient(135deg, #a9c4e9 60%, #dce8f7 60%);
}
thead .selected {
    background: linear-gradient(#f9d99f, #f1c15f);
    border-color: #f29536;
}
tbody th {
    width: 26px;
    font-size: 13px;
    background: #e4ecf7;
    border-color: #9eb6ce;
}
.chart {
    position: absolute;
    left: 26px;
    top: 17px;
    font: 12px "Liberation Sans", sans-serif;
}
.chart text { fill: #000; }
.chart .exp { font-size: 11px; }
.frame {
    fill: #fff;
    stroke: #2e66b8;
    stroke-width: 2;
}
.grid {
    fill: none;
    stroke: #dadada;
}
.axis {
    fill: none;
    stroke: #000;
}
.vscroll {
    display: flex;
    flex-direction: column;
    align-items: center;
    width: 20px;
    border-left: 1px solid #9fc3ef;
    border-right: 4px solid #b3cdf2;
    background: linear-gradient(90deg, #6f92c3, #7d9fca);
}
.split-h {
    width: 15px;
    height: 8px;
    border: 2px solid #fff;
    outline: 1px solid #6a8cba;
    background: linear-gradient(#7c98c4 1px, #dfe9f7 1px);
}
.vscroll .up {
    margin-top: 7px;
    border-width: 4px;
    border-top: 0;
    border-bottom-color: #3f4e78;
}
.vscroll .thumb {
    width: 14px;
    height: 37px;
    margin-top: 98px;
    border: 1px solid #4f6a9b;
    border-radius: 2px;
    background:
        repeating-linear-gradient(#6f7d95 0 1px, transparent 1px 3px) center / 8px 10px no-repeat,
        linear-gradient(90deg, #f7f9fc, #b4c6dd);
}
.vscroll .down {
    margin: auto 0 7px;
    border-width: 4px;
    border-bottom: 0;
    border-top-color: #3f4e78;
}

/* ouška listů */
.sheet-bar {
    display: flex;
    flex: none;
    height: 17px;
    border-bottom: 1px solid #5d83ba;
    background: linear-gradient(#8fabd5, #a2bbdf);
}
.nav {
    display: flex;
    align-items: center;
    justify-content: space-around;
    width: 63px;
    border-top: 1px solid #7f9fcc;
    background: linear-gradient(#e6f0fc, #b9d1f0);
}
.sheets {
    flex: 1;
    display: flex;
}
.sheet-tab {
    height: 16px;
    padding: 0 15px;
    margin-right: -9px;
    font-size: 12px;
    background: linear-gradient(#dce9fa, #b5ceef);
    clip-path: polygon(13px 0, 100% 0, calc(100% - 13px) 100%, 0 100%);
    border-top: 1px solid #7f9fcc;
}
.sheet-tab.active {
    padding: 0 14px 0 9px;
    font-weight: 700;
    background: linear-gradient(#fff, #e9f1fc);
    clip-path: polygon(0 0, 100% 0, calc(100% - 13px) 100%, 3px 100%);
    border-top-color: #fff;
}
.hscroll {
    display: flex;
    align-items: center;
    width: 558px;
    padding-right: 20px;
    background: #7696c4;
}
.split-v {
    width: 7px;
    height: 14px;
    border: 2px solid #fff;
    outline: 1px solid #6a8cba;
    background: linear-gradient(90deg, #7c98c4 1px, #dfe9f7 1px);
}
.left, .right {
    border: 4px solid transparent;
}
.left {
    margin: 0 7px 0 6px;
    border-left: 0;
    border-right-color: #34456f;
}
.right {
    margin: 0 7px 0 6px;
    border-right: 0;
    border-left-color: #34456f;
}
.track {
    flex: 1;
}
.hscroll .thumb {
    display: block;
    width: 74%;
    height: 14px;
    border: 1px solid #4f6a9b;
    border-radius: 2px;
    background:
        repeating-linear-gradient(90deg, #76839a 0 1px, transparent 1px 2px) center / 8px 7px no-repeat,
        linear-gradient(#f0f3f8, #cdd8e6 45%, #aebfd4);
}

/* stavový řádek */
.status {
    display: flex;
    flex: none;
    height: 22px;
    background: linear-gradient(#fff 1px, #d6e6fb 2px, #c6dcf9 35%, #a9c9f3 38%, #dbe9fb 90%);
}
.ready {
    width: 64px;
    padding: 3px 0 0 7px;
    border-right: 1px solid #8fb0de;
}
.status-right {
    display: flex;
    align-items: center;
    gap: 4px;
    margin-left: auto;
    width: 249px;
    padding: 0 5px 2px 6px;
    border-left: 1px solid #6f93c8;
    background: linear-gradient(#b4d2f8, #8fb6ed 40%, #76a2e0 45%, #a6c8f4);
}
.views {
    display: flex;
    border: 1px solid #a78e5c;
}
.views button {
    width: 18px;
    height: 16px;
    background: #d3d8e0;
}
.views .on {
    background: linear-gradient(#fde3b4, #fbbf54 50%, #ffe588);
}
.pct {
    margin: 0 4px;
}
.status input {
    appearance: none;
    flex: 1;
    min-width: 0;
    height: 14px;
    background: linear-gradient(#4f72a9, #e8f1fd) center / 100% 2px no-repeat;
}
.status input::-webkit-slider-thumb {
    appearance: none;
    width: 9px;
    height: 12px;
    border: 1px solid #4a5f86;
    border-radius: 1px 1px 5px 5px;
    background: #dfe9f8;
}

/* hlavní panel */
.taskbar {
    position: relative;
    display: flex;
    flex: none;
    align-items: center;
    gap: 4px;
    height: 39px;
    color: #fff;
    border-top: 1px solid #333c48;
    background:
        linear-gradient(rgba(255,255,255,.2), rgba(255,255,255,0) 12%),
        linear-gradient(90deg, #05090f 0, #0a0e14 27%, #3c4560 33%, #525a78 53%, #414a68 62%, #2e3a5a 68%, #3a445c 71%, #05090f 72%);
}
.task {
    width: 58px;
    height: 38px;
    border: 1px solid #a3a8b2;
    border-radius: 3px;
    background: linear-gradient(160deg, rgba(255,255,255,.45), rgba(255,255,255,.12) 55%, rgba(255,255,255,.2));
}
.task.plain {
    border: 0;
    background: none;
}
.task.start {
    width: 54px;
    margin-right: 2px;
}
.task.stack {
    box-shadow: inset -4px 0 0 -1px rgba(0,0,0,.35), inset -5px 0 0 -1px #a3a8b2;
}
.task.active {
    background: linear-gradient(160deg, rgba(255,255,255,.85), rgba(255,255,255,.45) 60%, rgba(255,255,255,.55));
}
.lang {
    margin-left: auto;
    margin-right: 108px;
    padding-bottom: 5px;
    font-size: 12px;
}
.clock {
    display: flex;
    flex-direction: column;
    align-items: center;
    gap: 4px;
    padding-bottom: 1px;
}
.show-desktop {
    width: 14px;
    height: 38px;
    margin: 0 0 0 8px;
    border: 1px solid #666b73;
    background: linear-gradient(150deg, #5a5d62, #15181d 50%);
}
.tooltip {
    position: absolute;
    right: 68px;
    bottom: 5px;
    padding: 3px 3px 2px;
    border: 1px solid #767676;
    border-radius: 2px;
    background: linear-gradient(#fff, #e4e5f0);
    color: #4c4c4c;
}
```
